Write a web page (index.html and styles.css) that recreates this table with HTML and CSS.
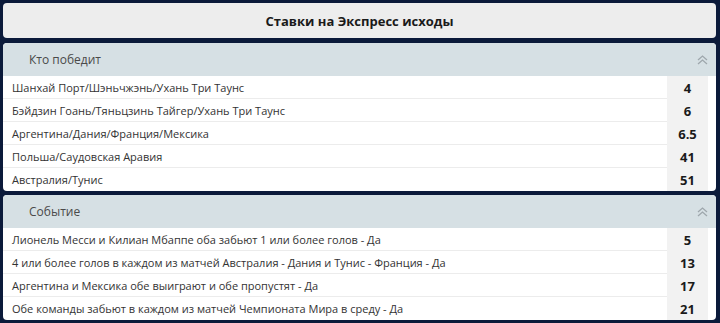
FILE: index.html
```html
<!DOCTYPE html>
<html lang="ru">
<head>
<meta charset="utf-8">
<link rel="stylesheet" href="styles.css">
</head>
<body>
<div class="page">
  <div class="title">Ставки на Экспресс исходы</div>
  <div class="section">
    <div class="head"><span>Кто победит</span>
      <svg class="chev" width="11" height="10" viewBox="0 0 11 10"><path d="M1 5 L5.5 1 L10 5 M1 9 L5.5 5 L10 9" fill="none" stroke="#9ea7ac" stroke-width="1.3"/></svg>
    </div>
    <div class="row"><div class="name">Шанхай Порт/Шэньчжэнь/Ухань Три Таунс</div><div class="odd">4</div></div>
    <div class="row"><div class="name">Бэйдзин Гоань/Тяньцзинь Тайгер/Ухань Три Таунс</div><div class="odd">6</div></div>
    <div class="row"><div class="name">Аргентина/Дания/Франция/Мексика</div><div class="odd">6.5</div></div>
    <div class="row"><div class="name">Польша/Саудовская Аравия</div><div class="odd">41</div></div>
    <div class="row last"><div class="name">Австралия/Тунис</div><div class="odd">51</div></div>
  </div>
  <div class="section">
    <div class="head"><span>Событие</span>
      <svg class="chev" width="11" height="10" viewBox="0 0 11 10"><path d="M1 5 L5.5 1 L10 5 M1 9 L5.5 5 L10 9" fill="none" stroke="#9ea7ac" stroke-width="1.3"/></svg>
    </div>
    <div class="row"><div class="name">Лионель Месси и Килиан Мбаппе оба забьют 1 или более голов - Да</div><div class="odd">5</div></div>
    <div class="row"><div class="name">4 или более голов в каждом из матчей Австралия - Дания и Тунис - Франция - Да</div><div class="odd">13</div></div>
    <div class="row"><div class="name">Аргентина и Мексика обе выиграют и обе пропустят - Да</div><div class="odd">17</div></div>
    <div class="row last"><div class="name">Обе команды забьют в каждом из матчей Чемпионата Мира в среду - Да</div><div class="odd">21</div></div>
  </div>
</div>
</body>
</html>
```
FILE: styles.css
```css
html, body {
  margin: 0;
  padding: 0;
  background: #0b1a3a;
}
body {
  font-family: "Open Sans", "Noto Sans", sans-serif;
  color: #333;
  width: 720px;
  height: 323px;
  overflow: hidden;
}
.page {
  padding: 3px 4px 0 3px;
  display: flex;
  flex-direction: column;
}
.title {
  height: 35px;
  background: #ededed;
  border-radius: 4px;
  display: flex;
  align-items: center;
  justify-content: center;
  font-weight: 700;
  font-size: 13px;
  color: #1a1a1a;
  margin-bottom: 5px;
}
.section {
  background: #fff;
  border-radius: 4px;
  overflow: hidden;
  margin-bottom: 4px;
}
.head {
  height: 33px;
  background: #d6e0e4;
  display: flex;
  align-items: center;
  justify-content: space-between;
  padding: 0 8px 0 26px;
  font-size: 12px;
  color: #4a4a4a;
}
.chev {
  display: block;
}
.row {
  display: flex;
  height: 23px;
  padding-right: 8px;
  font-size: 11px;
}
.name {
  flex: 1;
  display: flex;
  align-items: center;
  padding-left: 9px;
  border-bottom: 1px solid #ececec;
  color: #333;
}
.row.last .name {
  border-bottom: none;
}
.odd {
  width: 41px;
  background: #f2f2f2;
  display: flex;
  align-items: center;
  justify-content: center;
  font-weight: 700;
  font-size: 13px;
  color: #1a1a1a;
}
```
